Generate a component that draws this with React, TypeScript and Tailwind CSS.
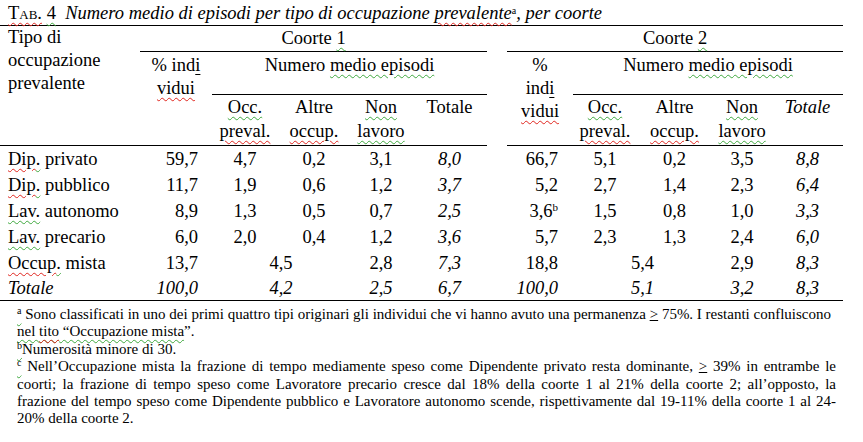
import type { ReactNode } from "react";

const Red = ({ children }: { children: ReactNode }) => (
  <span className="underline decoration-wavy decoration-[#e0261f] decoration-1 underline-offset-[3px]">{children}</span>
);

const Green = ({ children }: { children: ReactNode }) => (
  <span className="underline decoration-wavy decoration-[#3fa83f] decoration-1 underline-offset-[3px]">{children}</span>
);

type Row = {
  label: ReactNode;
  c1: string[];
  c2: string[];
  note?: boolean;
};

const rows: Row[] = [
  {
    label: (
      <>
        <Red>Dip</Red>
        <Green>.</Green> privato
      </>
    ),
    c1: ["59,7", "4,7", "0,2", "3,1", "8,0"],
    c2: ["66,7", "5,1", "0,2", "3,5", "8,8"],
  },
  {
    label: (
      <>
        <Red>Dip</Red>
        <Green>.</Green> pubblico
      </>
    ),
    c1: ["11,7", "1,9", "0,6", "1,2", "3,7"],
    c2: ["5,2", "2,7", "1,4", "2,3", "6,4"],
  },
  {
    label: (
      <>
        <Green>Lav.</Green> autonomo
      </>
    ),
    c1: ["8,9", "1,3", "0,5", "0,7", "2,5"],
    c2: ["3,6", "1,5", "0,8", "1,0", "3,3"],
    note: true,
  },
  {
    label: (
      <>
        <Green>Lav.</Green> precario
      </>
    ),
    c1: ["6,0", "2,0", "0,4", "1,2", "3,6"],
    c2: ["5,7", "2,3", "1,3", "2,4", "6,0"],
  },
];

const App = () => {
  const cell = "h-[26px] p-0 align-middle";
  return (
    <div className="w-[863px] h-[442px] bg-white text-black font-['Liberation_Serif','Times_New_Roman',serif] overflow-hidden">
      <div className="w-[843px]">
        {/* Title */}
        <p className="h-[25px] pl-2 pt-[3px] text-[18.5px] leading-[20px] whitespace-nowrap">
          <Red>
            <span className="[font-variant-caps:small-caps]">Tab.</span>
          </Red>{" "}
          <Green>4</Green>
          <span className="italic">
            {"  "}&nbsp;Numero medio di episodi per tipo di occupazione <Red>prevalente</Red>
            <sup className="text-[10px] not-italic">a</sup>, per coorte
          </span>
        </p>

        {/* Table */}
        <table className="w-[843px] table-fixed border-separate border-spacing-0 border-t border-b border-black text-[18.5px] leading-[23px]">
          <colgroup>
            <col className="w-[140px]" />
            <col className="w-[72px]" />
            <col className="w-[66px]" />
            <col className="w-[72px]" />
            <col className="w-[62px]" />
            <col className="w-[75px]" />
            <col className="w-[20px]" />
            <col className="w-[66px]" />
            <col className="w-[64px]" />
            <col className="w-[75px]" />
            <col className="w-[60px]" />
            <col className="w-[71px]" />
          </colgroup>
          <thead>
            <tr>
              <th rowSpan={3} className="p-0 pl-2 text-left font-normal align-top border-b border-black">
                Tipo di
                <br />
                occupazione
                <br />
                prevalente
              </th>
              <th colSpan={5} className="h-[26px] p-0 font-normal align-middle border-b border-black">
                Coorte <Green>1</Green>
              </th>
              <th rowSpan={3} className="p-0" />
              <th colSpan={5} className="h-[26px] p-0 font-normal align-middle border-b border-black">
                Coorte <Green>2</Green>
              </th>
            </tr>
            <tr>
              <th rowSpan={2} className="p-0 pt-[2px] font-normal align-top border-b border-black">
                % ind<span className="underline decoration-black underline-offset-[3px]">i</span>
                <br />
                <Red>vidui</Red>
              </th>
              <th colSpan={4} className="h-[43px] p-0 pt-[2px] font-normal align-top border-b border-black">
                Numero <Green>medio episodi</Green>
              </th>
              <th rowSpan={2} className="p-0 pt-[2px] font-normal align-top border-b border-black">
                %
                <br />
                ind<span className="underline decoration-black underline-offset-[3px]">i</span>
                <br />
                <Red>vidui</Red>
              </th>
              <th colSpan={4} className="h-[43px] p-0 pt-[2px] font-normal align-top border-b border-black">
                Numero <Green>medio episodi</Green>
              </th>
            </tr>
            <tr className="leading-[24px]">
              <th className="h-[51px] p-0 font-normal align-top border-b border-black">
                <Green>Occ.</Green>
                <br />
                <Red>preval.</Red>
              </th>
              <th className="p-0 font-normal align-top border-b border-black">
                Altre
                <br />
                <Red>occup.</Red>
              </th>
              <th className="p-0 font-normal align-top border-b border-black">
                <Green>Non</Green>
                <br />
                <Green>lavoro</Green>
              </th>
              <th className="p-0 font-normal align-top border-b border-black">Totale</th>
              <th className="p-0 font-normal align-top border-b border-black">
                <Green>Occ.</Green>
                <br />
                <Red>preval.</Red>
              </th>
              <th className="p-0 font-normal align-top border-b border-black">
                Altre
                <br />
                <Red>occup.</Red>
              </th>
              <th className="p-0 font-normal align-top border-b border-black">
                <Green>Non</Green>
                <br />
                <Green>lavoro</Green>
              </th>
              <th className="p-0 font-normal italic align-top border-b border-black">Totale</th>
            </tr>
          </thead>
          <tbody className="text-center">
            {rows.map((r, i) => (
              <tr key={i}>
                <td className={`${cell} pl-2 text-left whitespace-nowrap`}>{r.label}</td>
                <td className={`${cell} pr-[14px] text-right`}>{r.c1[0]}</td>
                <td className={cell}>{r.c1[1]}</td>
                <td className={cell}>{r.c1[2]}</td>
                <td className={cell}>{r.c1[3]}</td>
                <td className={`${cell} italic`}>{r.c1[4]}</td>
                <td className={cell} />
                <td className={`${cell} pr-[15px] text-right`}>
                  {r.c2[0]}
                  {r.note && <sup className="text-[11px]">b</sup>}
                </td>
                <td className={cell}>{r.c2[1]}</td>
                <td className={cell}>{r.c2[2]}</td>
                <td className={cell}>{r.c2[3]}</td>
                <td className={`${cell} italic`}>{r.c2[4]}</td>
              </tr>
            ))}
            <tr>
              <td className={`${cell} pl-2 text-left whitespace-nowrap`}>
                <Red>Occup</Red>
                <Green>.</Green> mista
              </td>
              <td className={`${cell} pr-[14px] text-right`}>13,7</td>
              <td colSpan={2} className={cell}>
                4,5
              </td>
              <td className={cell}>2,8</td>
              <td className={`${cell} italic`}>7,3</td>
              <td className={cell} />
              <td className={`${cell} pr-[15px] text-right`}>18,8</td>
              <td colSpan={2} className={cell}>
                5,4
              </td>
              <td className={cell}>2,9</td>
              <td className={`${cell} italic`}>8,3</td>
            </tr>
            <tr className="italic">
              <td className="h-[24px] p-0 pl-2 text-left align-middle">Totale</td>
              <td className="p-0 pr-[14px] text-right align-middle">100,0</td>
              <td colSpan={2} className="p-0 align-middle">
                4,2
              </td>
              <td className="p-0 align-middle">2,5</td>
              <td className="p-0 align-middle">6,7</td>
              <td className="p-0" />
              <td className="p-0 pr-[15px] text-right align-middle">100,0</td>
              <td colSpan={2} className="p-0 align-middle">
                5,1
              </td>
              <td className="p-0 align-middle">3,2</td>
              <td className="p-0 align-middle">8,3</td>
            </tr>
          </tbody>
        </table>

        {/* Footnotes */}
        <div className="pl-[17px] pr-[7px] pt-[5px] text-[15px] leading-[17.4px]">
          <p className="whitespace-nowrap">
            <Green>
              <sup className="text-[10px]">a</sup>
            </Green>{" "}
            Sono classificati in uno dei primi quattro tipi originari gli individui che vi hanno avuto una permanenza{" "}
            <span className="underline underline-offset-[1px]">&gt;</span> 75%. I restanti confluiscono
            <br />
            <Green>
              nel <Red>tito</Red> “Occupazione mista
            </Green>
            ”.
          </p>
          <p>
            <Green>
              <sup className="text-[10px]">b</sup>
            </Green>
            Numerosità minore di 30.
          </p>
          <div className="text-justify">
            <div className="[text-align-last:justify]">
              <Green>
                <sup className="text-[10px]">c</sup>
              </Green>{" "}
              Nell’Occupazione mista la frazione di tempo mediamente speso come Dipendente privato resta dominante,{" "}
              <span className="underline underline-offset-[1px]">&gt;</span> 39% in entrambe le
            </div>
            <div className="[text-align-last:justify]">
              coorti; la frazione di tempo speso come Lavoratore precario cresce dal 18% della coorte 1 al 21% della coorte 2; all’opposto, la
            </div>
            <div className="[text-align-last:justify]">
              frazione del tempo speso come Dipendente pubblico e Lavoratore autonomo scende, rispettivamente dal 19-11% della coorte 1 al 24-
            </div>
            <div>20% della coorte 2.</div>
          </div>
        </div>
      </div>
    </div>
  );
};

export default App;
